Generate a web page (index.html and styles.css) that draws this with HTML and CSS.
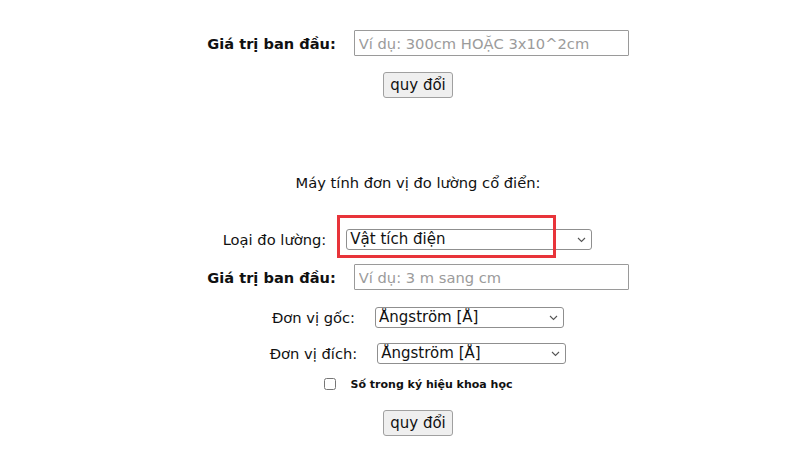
FILE: index.html
```html
<!DOCTYPE html>
<html lang="vi">
<head>
    <meta charset="UTF-8">
    <meta name="viewport" content="width=device-width, initial-scale=1.0">
    <title>Máy tính đơn vị đo lường</title>
    <link rel="stylesheet" href="styles.css">
</head>
<body>

    <div class="page">

        <!-- Quy đổi nhanh -->
        <div class="row first-row">
            <label class="bold-label" for="value1">Giá trị ban đầu:</label>
            <input type="text" id="value1" class="text-input" placeholder="Ví dụ: 300cm HOẶC 3x10^2cm">
        </div>
        <div class="row btn-row">
            <button class="convert-btn">quy đổi</button>
        </div>

        <!-- Máy tính cổ điển -->
        <p class="title">Máy tính đơn vị đo lường cổ điển:</p>

        <div class="row type-row">
            <label for="type">Loại đo lường:</label>
            <span class="select-wrap highlight">
                <select id="type" class="select select-type">
                    <option>Vật tích điện</option>
                </select>
                <svg class="chevron" width="9" height="6" viewBox="0 0 9 6"><path d="M1 1 L4.5 4.5 L8 1" fill="none" stroke="#555" stroke-width="1.1"/></svg>
            </span>
        </div>

        <div class="row value-row">
            <label class="bold-label" for="value2">Giá trị ban đầu:</label>
            <input type="text" id="value2" class="text-input" placeholder="Ví dụ: 3 m sang cm">
        </div>

        <div class="row from-row">
            <label for="from">Đơn vị gốc:</label>
            <span class="select-wrap">
                <select id="from" class="select select-unit">
                    <option>Ångström [Å]</option>
                </select>
                <svg class="chevron" width="9" height="6" viewBox="0 0 9 6"><path d="M1 1 L4.5 4.5 L8 1" fill="none" stroke="#555" stroke-width="1.1"/></svg>
            </span>
        </div>

        <div class="row to-row">
            <label for="to">Đơn vị đích:</label>
            <span class="select-wrap">
                <select id="to" class="select select-unit">
                    <option>Ångström [Å]</option>
                </select>
                <svg class="chevron" width="9" height="6" viewBox="0 0 9 6"><path d="M1 1 L4.5 4.5 L8 1" fill="none" stroke="#555" stroke-width="1.1"/></svg>
            </span>
        </div>

        <div class="row check-row">
            <input type="checkbox" id="sci" class="check">
            <label class="small-bold" for="sci">Số trong ký hiệu khoa học</label>
        </div>

        <div class="row btn-row-2">
            <button class="convert-btn">quy đổi</button>
        </div>

    </div>

</body>
</html>
```

FILE: styles.css
```css
body {
    margin: 0;
    background: #ffffff;
    font-family: "DejaVu Sans", Verdana, sans-serif;
    color: #111;
}

.page {
    margin-left: 36px;
    width: 764px;
    padding-top: 30px;
}

.row {
    display: flex;
    justify-content: center;
    align-items: center;
    height: 26px;
    font-size: 14.7px;
}

.bold-label {
    font-weight: bold;
    font-size: 14.6px;
    margin-right: 18px;
}

.text-input {
    width: 275px;
    height: 26px;
    box-sizing: border-box;
    border: 1px solid #9a9a9a;
    border-radius: 1px;
    padding: 0 4px;
    font-family: inherit;
    font-size: 14.7px;
}

.text-input::placeholder {
    color: #9b9b9b;
}

/* Nút quy đổi */
.convert-btn {
    height: 26px;
    width: 70px;
    padding: 0;
    border: 1px solid #a0a0a0;
    border-radius: 3px;
    background-color: #efefef;
    font-family: inherit;
    font-size: 15px;
    color: #111;
}

.btn-row {
    margin-top: 16px;
}

.title {
    margin: 76px 0 0;
    height: 18px;
    line-height: 18px;
    text-align: center;
    font-size: 14.7px;
}

.type-row {
    margin-top: 34px;
    margin-right: 21px;
}

.type-row label {
    margin-right: 20px;
}

.value-row {
    margin-top: 12px;
}

.from-row {
    margin-top: 14px;
}

.from-row label,
.to-row label {
    margin-right: 20px;
}

.to-row {
    margin-top: 10px;
}

.check-row {
    margin-top: 5px;
}

.btn-row-2 {
    margin-top: 13px;
}

/* Hộp chọn */
.select-wrap {
    position: relative;
    display: inline-block;
    height: 21px;
}

.select {
    appearance: none;
    -webkit-appearance: none;
    height: 21px;
    box-sizing: border-box;
    border: 1px solid #8f8f8f;
    border-radius: 3px;
    background: #fff;
    padding: 0 3px;
    font-family: inherit;
    font-size: 15px;
    color: #111;
    line-height: 19px;
}

.select-type {
    width: 246px;
}

.select-unit {
    width: 189px;
}

.chevron {
    position: absolute;
    right: 6px;
    top: 8px;
    pointer-events: none;
}

/* Khung đỏ đánh dấu */
.highlight::after {
    content: "";
    position: absolute;
    left: -9px;
    top: -14px;
    width: 219px;
    height: 43px;
    box-sizing: border-box;
    border: 3px solid #e8343a;
    pointer-events: none;
}

.check {
    width: 12px;
    height: 12px;
    margin: 0 15px 0 0;
}

.small-bold {
    font-weight: bold;
    font-size: 11px;
}
```
